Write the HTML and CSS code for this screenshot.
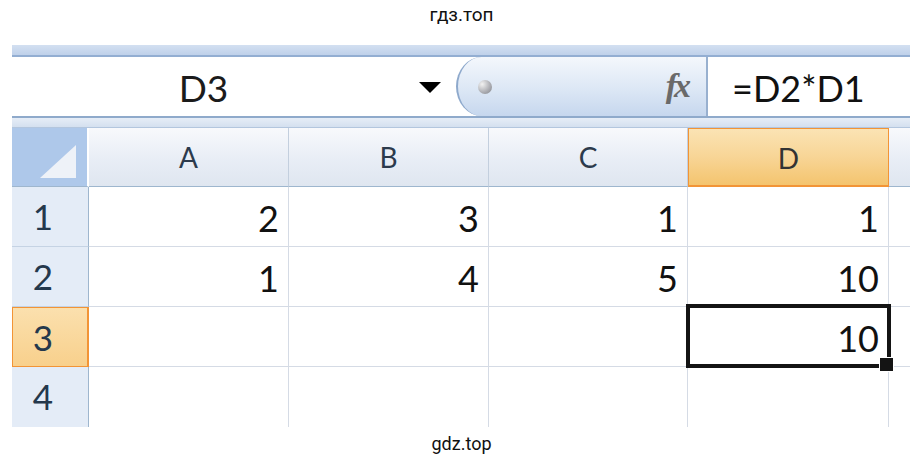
FILE: index.html
```html
<!DOCTYPE html>
<html lang="ru">
<head>
<meta charset="utf-8">
<title>Excel</title>
<link rel="stylesheet" href="styles.css">
</head>
<body>
<div class="caption top">гдз.топ</div>
<div class="excel">
  <div class="band"></div>
  <div class="fbar">
    <div class="namebox">
      <span class="name">D3</span>
      <span class="arrow"></span>
    </div>
    <div class="pill">
      <span class="dot"></span>
      <span class="fx">fx</span>
    </div>
    <div class="formula">=D2*D1</div>
  </div>
  <div class="sep"></div>
  <div class="grid">
    <div class="corner"><span class="tri"></span></div>
    <div class="ch">A</div>
    <div class="ch">B</div>
    <div class="ch">C</div>
    <div class="ch sel">D</div>
    <div class="ch last"></div>

    <div class="rh">1</div>
    <div class="c">2</div><div class="c">3</div><div class="c">1</div><div class="c">1</div><div class="c e"></div>

    <div class="rh">2</div>
    <div class="c">1</div><div class="c">4</div><div class="c">5</div><div class="c">10</div><div class="c e"></div>

    <div class="rh sel">3</div>
    <div class="c"></div><div class="c"></div><div class="c"></div><div class="c active">10</div><div class="c e"></div>

    <div class="rh end">4</div>
    <div class="c end"></div><div class="c end"></div><div class="c end"></div><div class="c end"></div><div class="c e end"></div>
  </div>
</div>
<div class="caption bottom">gdz.top</div>
</body>
</html>
```

FILE: styles.css
```css
* { box-sizing: border-box; }
html, body { margin: 0; padding: 0; background: #fff; }
body { width: 921px; height: 466px; overflow: hidden; font-family: Lato, "Open Sans", sans-serif; }

.caption {
  font-family: Roboto, "Liberation Sans", sans-serif;
  color: #111;
  text-align: center;
  padding-left: 2px;
}
.caption.top { height: 45px; font-size: 19px; line-height: 19px; padding-top: 5px; }
.caption.bottom { height: 38px; font-size: 18px; line-height: 18px; padding-top: 8px; }

.excel { width: 898px; margin-left: 12px; }

.band {
  height: 12px;
  background: linear-gradient(#d3e0f1, #bfd1ea);
  border-bottom: 2px solid #93aed2;
}

.fbar { display: flex; height: 59px; background: #fff; }
.namebox { width: 444px; display: flex; align-items: center; }
.name {
  flex: 1;
  text-align: center;
  font-size: 37px;
  color: #1b1b1b;
  margin-right: 24px;
  line-height: 1;
  padding-top: 2px;
}
.arrow {
  width: 0; height: 0;
  border-left: 11px solid transparent;
  border-right: 11px solid transparent;
  border-top: 11px solid #000;
  margin-right: 15px;
  margin-top: 1px;
}
.pill {
  width: 252px;
  display: flex;
  align-items: center;
  justify-content: space-between;
  background: linear-gradient(#f4f7fc, #dce7f5 55%, #c6d7ee);
  border-left: 2px solid #8ea9cc;
  border-right: 2px solid #98b0cf;
  border-radius: 26px 0 0 26px / 30px 0 0 30px;
  padding: 0 18px 0 20px;
}
.dot {
  width: 14px; height: 14px;
  border-radius: 50%;
  background: radial-gradient(circle at 30% 30%, #f2f2f2, #b0b1b6 55%, #7f8187);
}
.fx {
  font-family: "Liberation Serif", serif;
  font-style: italic;
  font-weight: bold;
  font-size: 34px;
  color: #6a6a6a;
  letter-spacing: -3px;
  line-height: 1;
  padding-bottom: 2px;
}
.formula {
  flex: 1;
  display: flex;
  align-items: center;
  padding-left: 24px;
  font-size: 36px;
  color: #111;
  padding-top: 3px;
}

.sep {
  height: 12px;
  border-top: 2px solid #8faacb;
  background: linear-gradient(#e6edf7, #d4e0ef);
  border-bottom: 1px solid #b3c6de;
}

.grid {
  display: grid;
  grid-template-columns: 77px 200px 200px 199px 201px 21px;
  grid-template-rows: 59px repeat(4, 60px);
}

.corner {
  background: #aec8ea;
  border-right: 2px solid #fff;
  border-bottom: 1px solid #9eb6ce;
  position: relative;
}
.tri {
  position: absolute;
  left: 28px; top: 17px;
  width: 0; height: 0;
  border-left: 36px solid transparent;
  border-bottom: 33px solid #eef2f8;
}

.ch {
  background: linear-gradient(#f8f9fc, #e9eef6 50%, #dfe6f0);
  border-right: 1px solid #c3cfde;
  border-bottom: 1px solid #9eb6ce;
  text-align: center;
  font-size: 28px;
  line-height: 58px;
  color: #2c3a4c;
}
.ch.sel {
  background: linear-gradient(#fbe3b4, #f8d596 50%, #f4c46e);
  border: 1px solid #f29436;
  border-bottom-width: 2px;
  color: #333;
}
.ch.last { border-right: none; }

.rh {
  background: #e4ecf7;
  border-right: 1px solid #9eb6ce;
  border-bottom: 1px solid #c5d3e4;
  text-align: center;
  font-size: 35px;
  line-height: 58px;
  color: #24384c;
  padding-right: 14px;
}
.rh.sel {
  background: linear-gradient(#fbe0ae, #f8d08c);
  border: 1px solid #f29436;
  border-right-width: 2px;
}
.rh.end { border-bottom: none; }

.c {
  border-right: 1px solid #d5dbe5;
  border-bottom: 1px solid #d5dbe5;
  text-align: right;
  font-size: 36px;
  line-height: 62px;
  padding-right: 9px;
  color: #111;
}
.c.e { border-right: none; }
.c.end { border-bottom: none; }

.c.active { position: relative; }
.c.active::after {
  content: "";
  position: absolute;
  left: -2px; top: -3px; right: -3px; bottom: -2px;
  border: 4px solid #141414;
}
.c.active::before {
  content: "";
  position: absolute;
  right: -6px; bottom: -6px;
  width: 13px; height: 13px;
  background: #141414;
  border: 1px solid #fff;
  z-index: 2;
}
```
